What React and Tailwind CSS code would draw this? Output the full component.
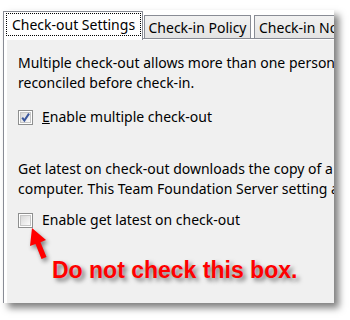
import React from 'react';

const Checkbox = ({ checked }) => (
  <span className="flex h-[15px] w-[15px] shrink-0 items-center justify-center border border-[#8e8f8f] bg-white">
    <span className="relative flex h-[11px] w-[11px] items-center justify-center border border-[#c6c6c6] bg-gradient-to-br from-[#d8d8d8] to-[#fbfbfb]">
      {checked && (
        <svg width="11" height="11" viewBox="0 0 11 11" className="absolute -left-[1px] -top-[1px]">
          <path d="M2.2 5.6 L4.4 8.6 L9 1.6" fill="none" stroke="#3b579d" strokeWidth="2" strokeLinejoin="miter" />
        </svg>
      )}
    </span>
  </span>
);

const App = () => {
  return (
    <div
      className="relative h-[320px] w-[350px] overflow-hidden bg-white pl-[3px] pt-[10px] text-black"
      style={{ fontFamily: '"Noto Sans", "Open Sans", sans-serif' }}
    >
      <div className="flex h-[293px] w-[331px] flex-col overflow-hidden bg-white shadow-[5px_5px_7px_rgba(0,0,0,0.5)]">
        {/* tab strip */}
        <div className="flex h-[30px] shrink-0">
          <div className="mt-[1px] h-[29px] w-[140px] shrink-0 border border-b-0 border-[#898c95] bg-white pl-[2px] pr-[1px] pt-[1px]">
            <div className="flex h-[23px] items-center justify-center border border-dotted border-black text-[14px]">
              Check-out Settings
            </div>
          </div>
          <div className="flex min-w-0 flex-1 flex-col">
            <div className="mt-[5px] flex h-[23px] gap-[3px] pl-[1px]">
              <div className="flex w-[107px] shrink-0 items-center justify-center border border-b-0 border-[#898c95] bg-gradient-to-b from-[#f2f2f2] to-[#e3e3e3] text-[14px]">
                Check-in Policy
              </div>
              <div className="flex w-[100px] shrink-0 items-center whitespace-nowrap border border-b-0 border-[#898c95] bg-gradient-to-b from-[#f2f2f2] to-[#e3e3e3] pl-[4px] text-[14px]">
                Check-in Notes
              </div>
            </div>
            <div className="h-[1px] bg-[#898c95]" />
          </div>
        </div>

        {/* tab page */}
        <div className="flex flex-1 border-l border-[#898c95] bg-white pl-[3px]">
          <div className="flex flex-1 flex-col whitespace-nowrap bg-[#f0f0f0] pl-[11px] text-[14px] leading-[20px]">
            <p className="mt-[13px]">
              Multiple check-out allows more than one person to
              <br />
              reconciled before check-in.
            </p>

            <label className="mt-[14px] flex h-[20px] items-center gap-[9px]">
              <Checkbox checked />
              <span>
                <u>E</u>nable multiple check-out
              </span>
            </label>

            <p className="mt-[32px]">
              Get latest on check-out downloads the copy of a file
              <br />
              computer. This Team Foundation Server setting applies
            </p>

            <label className="mt-[11px] flex h-[20px] items-center gap-[9px]">
              <Checkbox />
              <span>
                Enable <u>g</u>et latest on check-out
              </span>
            </label>

            <p
              className="ml-[34px] mt-[27px] text-[23px] font-bold leading-[26px] text-[#ff0000] [text-shadow:3px_3px_4px_rgba(0,0,0,0.5)]"
              style={{ fontFamily: '"Liberation Sans", Arial, sans-serif' }}
            >
              Do not check this box.
            </p>
          </div>
        </div>
      </div>

      {/* annotation arrow */}
      <svg
        width="350"
        height="320"
        viewBox="0 0 350 320"
        className="pointer-events-none absolute left-0 top-0 drop-shadow-[2px_3px_2px_rgba(0,0,0,0.45)]"
      >
        <polygon
          points="32,228 46,240 40.5,242.2 46.5,257 41.5,259 35.5,244 30,246"
          fill="#ff0000"
        />
      </svg>
    </div>
  );
};

export default App;
